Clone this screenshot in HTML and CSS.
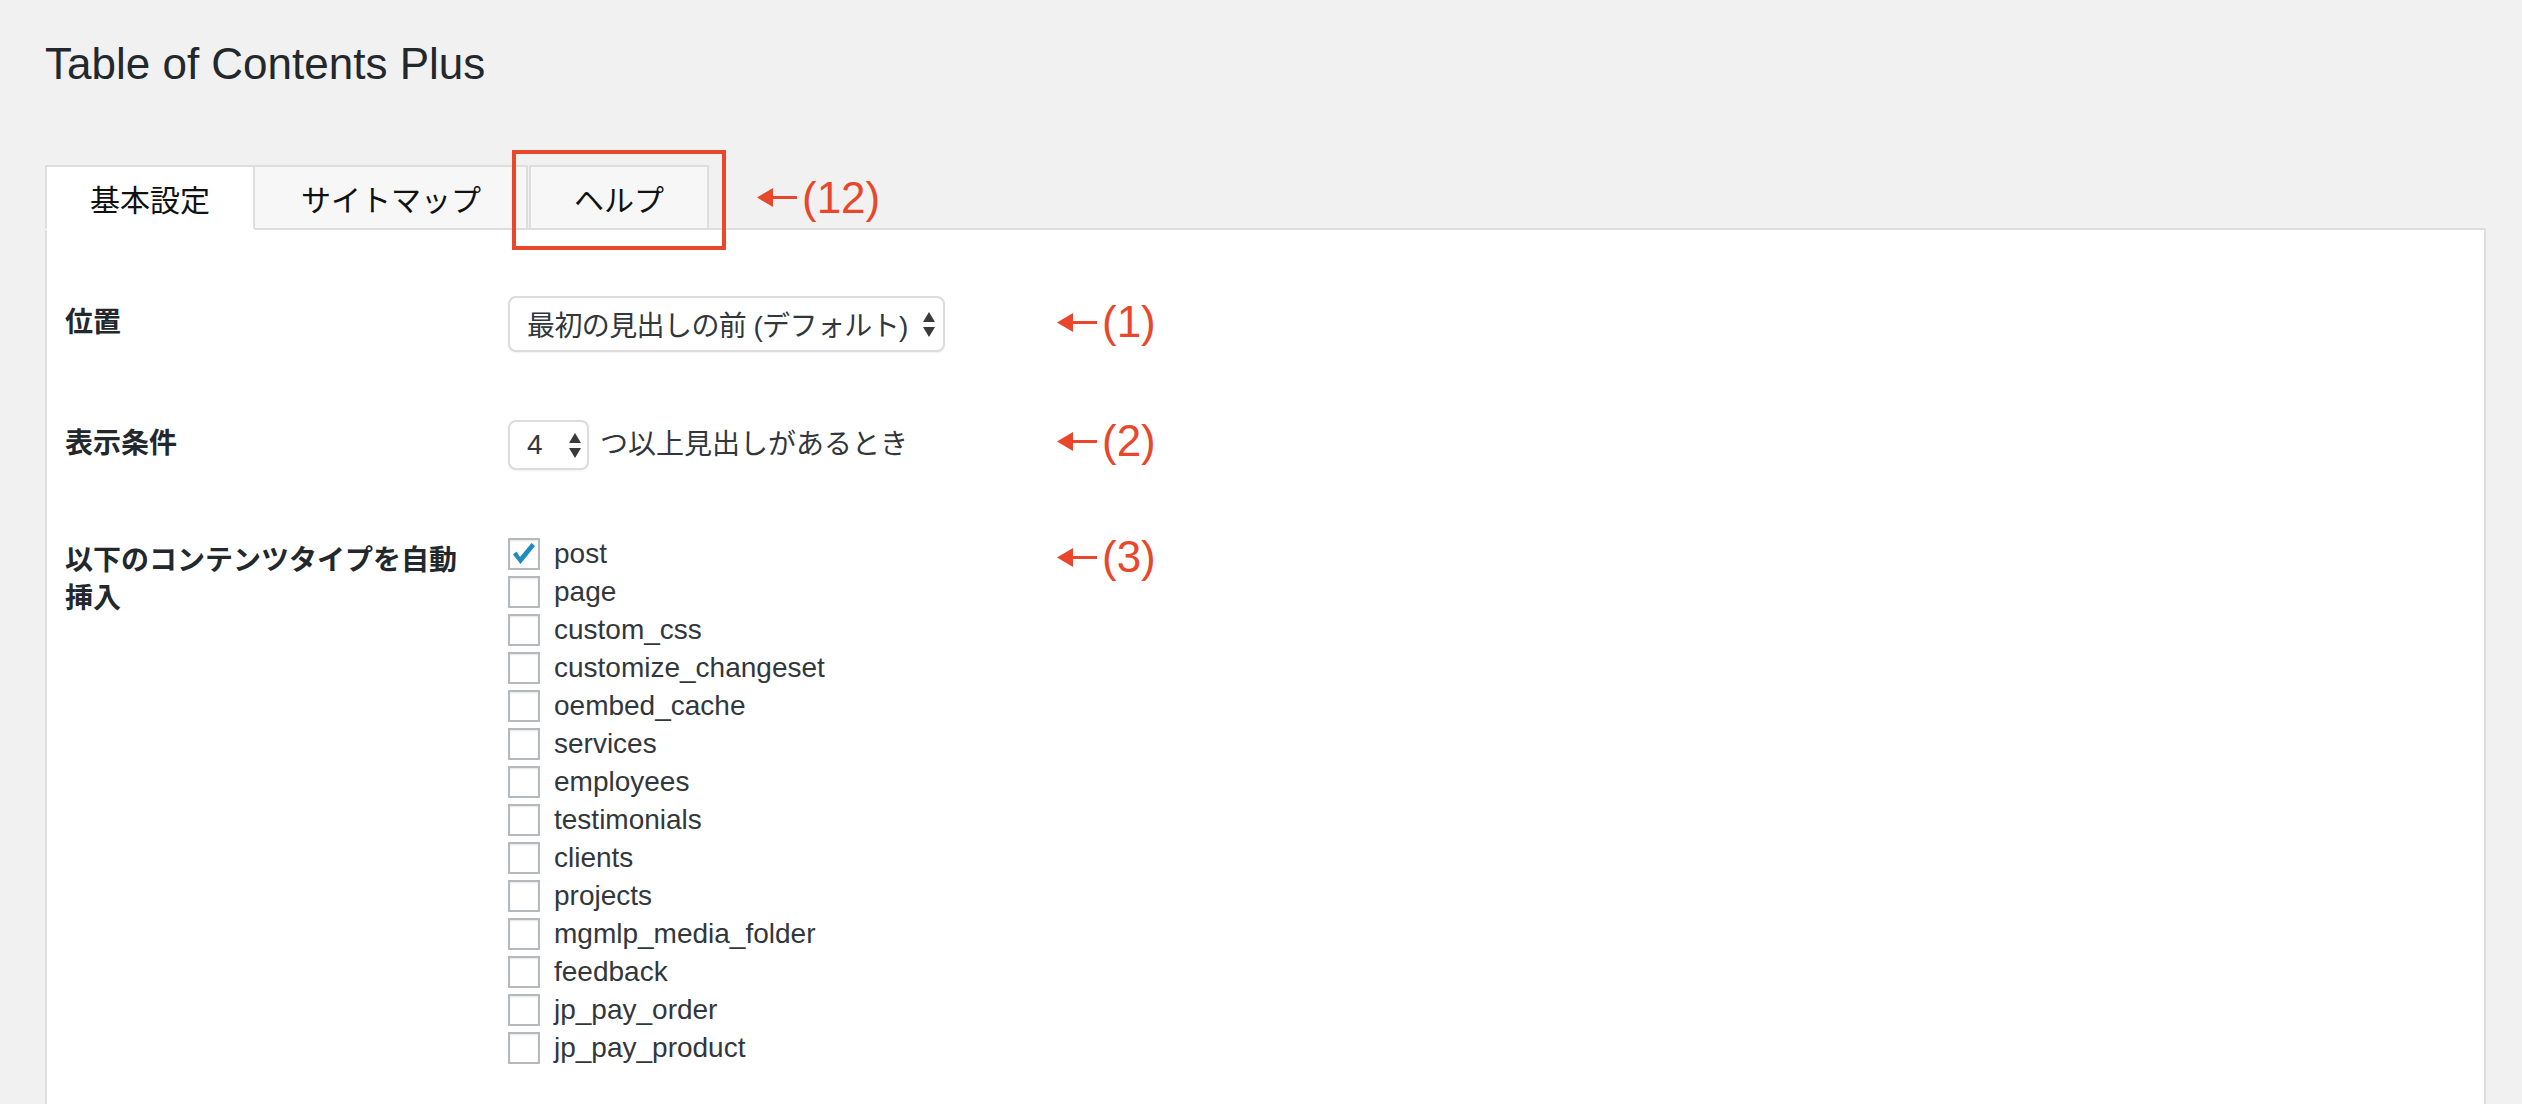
FILE: index.html
```html
<!DOCTYPE html>
<html lang="ja">
<head>
    <meta charset="UTF-8">
    <title>Table of Contents Plus</title>
    <link rel="stylesheet" href="styles.css">
</head>
<body>
    <div class="wrap">
        <h1 class="page-title">Table of Contents Plus</h1>

        <div class="tabs">
            <a class="tab tab-active">基本設定</a>
            <a class="tab tab-sitemap">サイトマップ</a>
            <a class="tab tab-help">ヘルプ<span class="mark-box"></span></a>
            <span class="note note-tab">
                <svg class="note-arrow" width="40" height="19" viewBox="0 0 40 19"><polygon points="0,9.5 16,0 16,19"/><rect x="14" y="8" width="26" height="3"/></svg>(12)
            </span>
        </div>

        <div class="panel">
            <div class="row row-position">
                <div class="label">位置</div>
                <div class="field">
                    <div class="select">
                        <span class="select-text">最初の見出しの前 (デフォルト)</span>
                        <svg class="spin" width="12" height="25" viewBox="0 0 12 25"><polygon points="6,0 12,10 0,10"/><polygon points="0,15 12,15 6,25"/></svg>
                    </div>
                </div>
                <div class="note">
                    <svg class="note-arrow" width="40" height="19" viewBox="0 0 40 19"><polygon points="0,9.5 16,0 16,19"/><rect x="14" y="8" width="26" height="3"/></svg>(1)
                </div>
            </div>

            <div class="row row-count">
                <div class="label">表示条件</div>
                <div class="field field-inline">
                    <div class="number">
                        <span>4</span>
                        <svg class="spin" width="12" height="25" viewBox="0 0 12 25"><polygon points="6,0 12,10 0,10"/><polygon points="0,15 12,15 6,25"/></svg>
                    </div>
                    <span class="after">つ以上見出しがあるとき</span>
                </div>
                <div class="note">
                    <svg class="note-arrow" width="40" height="19" viewBox="0 0 40 19"><polygon points="0,9.5 16,0 16,19"/><rect x="14" y="8" width="26" height="3"/></svg>(2)
                </div>
            </div>

            <div class="row row-types">
                <div class="label">以下のコンテンツタイプを自動挿入</div>
                <div class="field">
                    <ul class="checks">
                        <li><span class="box checked"><svg width="28" height="28" viewBox="0 0 28 28"><path d="M3 14.5 L6.5 11.5 L10 17 L21.5 3 L25 6 L10.5 24 Z"/></svg></span>post</li>
                        <li><span class="box"></span>page</li>
                        <li><span class="box"></span>custom_css</li>
                        <li><span class="box"></span>customize_changeset</li>
                        <li><span class="box"></span>oembed_cache</li>
                        <li><span class="box"></span>services</li>
                        <li><span class="box"></span>employees</li>
                        <li><span class="box"></span>testimonials</li>
                        <li><span class="box"></span>clients</li>
                        <li><span class="box"></span>projects</li>
                        <li><span class="box"></span>mgmlp_media_folder</li>
                        <li><span class="box"></span>feedback</li>
                        <li><span class="box"></span>jp_pay_order</li>
                        <li><span class="box"></span>jp_pay_product</li>
                    </ul>
                </div>
                <div class="note">
                    <svg class="note-arrow" width="40" height="19" viewBox="0 0 40 19"><polygon points="0,9.5 16,0 16,19"/><rect x="14" y="8" width="26" height="3"/></svg>(3)
                </div>
            </div>
        </div>
    </div>
</body>
</html>
```

FILE: styles.css
```css
body {
    margin: 0;
    background-color: #f1f1f1;
    color: #32373c;
    font-family: 'Liberation Sans', 'Noto Sans CJK JP', sans-serif;
    font-size: 28px;
}
.wrap {
    padding: 0 36px 0 45px;
}
.page-title {
    margin: 35px 0 0;
    font-size: 44px;
    font-weight: 400;
    line-height: 58px;
    color: #23282d;
}

/* tabs */
.tabs {
    display: flex;
    margin-top: 72px;
    margin-bottom: -2px;
    position: relative;
    z-index: 1;
}
.tab {
    display: flex;
    align-items: center;
    height: 65px;
    box-sizing: border-box;
    padding: 0 43px;
    border: 2px solid #dedede;
    background: #f7f7f7;
    font-family: 'Noto Sans CJK JP', sans-serif;
    font-size: 30px;
    color: #111;
}
.tab-active {
    background: #fff;
    border-bottom-color: #fff;
}
.tab-sitemap {
    border-left: none;
    padding: 0 45px 0 46px;
}
.tab-help {
    margin-left: 1px;
    position: relative;
}
.mark-box {
    position: absolute;
    left: -19px;
    top: -17px;
    width: 214px;
    height: 100px;
    box-sizing: border-box;
    border: 4px solid #e8472b;
}

/* red notes */
.note {
    display: flex;
    align-items: center;
    font-size: 44px;
    line-height: 50px;
    color: #e8472b;
}
.note-arrow {
    fill: #e8472b;
    margin-right: 5px;
}
.note-tab {
    align-self: center;
    margin-left: 48px;
}

/* panel */
.panel {
    background: #fff;
    border: 2px solid #dedede;
    padding: 66px 18px 90px;
}
.row {
    display: grid;
    grid-template-columns: 443px 549px auto;
    align-items: start;
    margin-bottom: 68px;
}
.label {
    box-sizing: border-box;
    padding-right: 43px;
    font-weight: 700;
    line-height: 36px;
    color: #23282d;
}
.row-position .label { padding-top: 9px; }
.row-position .note { margin-top: 1px; }
.row-count .label { padding-top: 6px; }
.row-count .note { margin-top: -4px; }
.row-types .label { padding-top: 4px; line-height: 38px; }
.row-types .note { margin-top: -6px; }

.select, .number {
    display: flex;
    align-items: center;
    justify-content: space-between;
    box-sizing: border-box;
    border: 2px solid #dcdcdc;
    border-radius: 8px;
    background: #fff;
    box-shadow: 0 1px 2px rgba(0,0,0,0.06);
    color: #32373c;
}
.select {
    width: 437px;
    height: 56px;
    padding: 0 8px 0 17px;
}
.select-text {
    letter-spacing: -0.6px;
}
.number {
    width: 81px;
    height: 50px;
    padding: 0 6px 0 17px;
}
.spin {
    fill: #3a3a3a;
}
.field-inline {
    display: flex;
    align-items: center;
}
.after {
    margin-left: 11px;
    margin-top: -6px;
}

/* checkbox list */
.checks {
    list-style: none;
    margin: 0;
    padding: 0;
}
.checks li {
    display: flex;
    align-items: center;
    height: 32px;
    margin-bottom: 6px;
    line-height: 32px;
}
.box {
    display: flex;
    align-items: center;
    justify-content: center;
    width: 32px;
    height: 32px;
    box-sizing: border-box;
    margin-right: 14px;
    border: 2px solid #b4b9be;
    background: #fff;
    box-shadow: inset 0 1px 2px rgba(0,0,0,0.1);
}
.box svg {
    fill: #1e8cbe;
}
```
